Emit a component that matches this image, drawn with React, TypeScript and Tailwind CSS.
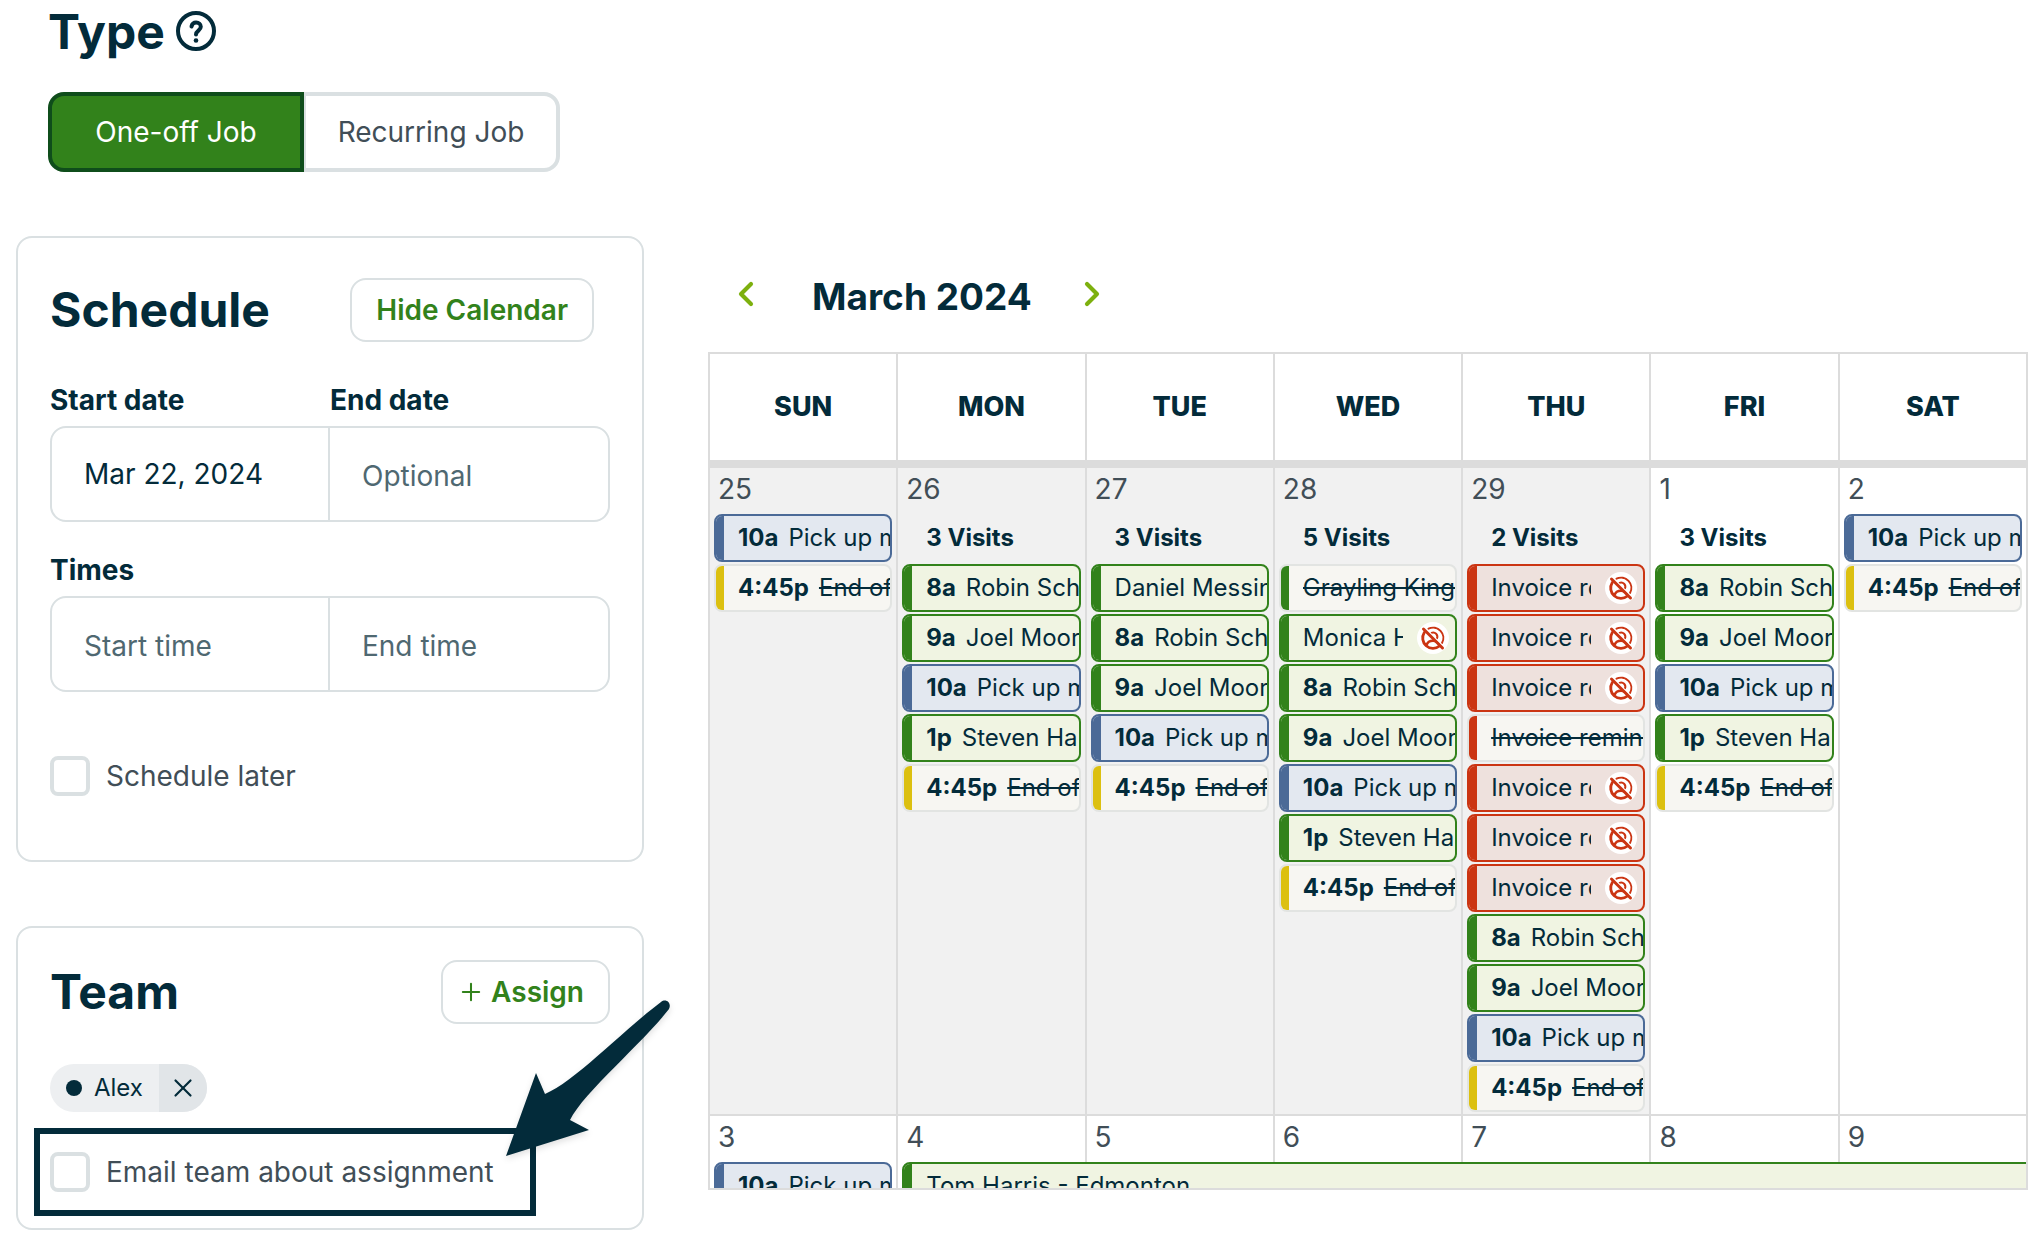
import { ChevronLeft, ChevronRight, Plus, X } from 'lucide-react';
import React, { useState } from 'react';
import { clsx } from 'clsx';

type Tone = 'blue' | 'green' | 'red' | 'yellow';

interface Visit {
  time?: string;
  title: string;
  tone: Tone;
  done?: boolean;
  unassigned?: boolean;
  spans?: boolean;
}

interface Day {
  date: number;
  outside?: boolean;
  visits?: number;
  items: Visit[];
}

const robin: Visit = { time: '8a', title: 'Robin Scho', tone: 'green' };
const joel: Visit = { time: '9a', title: 'Joel Moore', tone: 'green' };
const steven: Visit = { time: '1p', title: 'Steven Ha', tone: 'green' };
const pickUp: Visit = { time: '10a', title: 'Pick up mail', tone: 'blue' };
const endOfDay: Visit = { time: '4:45p', title: 'End of day', tone: 'yellow', done: true };
const invoice: Visit = { title: 'Invoice reminder', tone: 'red', unassigned: true };
const invoiceDone: Visit = { title: 'Invoice reminder', tone: 'red', done: true };

const weekdays = ['SUN', 'MON', 'TUE', 'WED', 'THU', 'FRI', 'SAT'];

const weeks: Day[][] = [
  [
    { date: 25, outside: true, items: [pickUp, endOfDay] },
    { date: 26, outside: true, visits: 3, items: [robin, joel, pickUp, steven, endOfDay] },
    {
      date: 27,
      outside: true,
      visits: 3,
      items: [{ title: 'Daniel Messina', tone: 'green' }, robin, joel, pickUp, endOfDay],
    },
    {
      date: 28,
      outside: true,
      visits: 5,
      items: [
        { title: 'Grayling King', tone: 'green', done: true },
        { title: 'Monica Hall', tone: 'green', unassigned: true },
        robin,
        joel,
        pickUp,
        steven,
        endOfDay,
      ],
    },
    {
      date: 29,
      outside: true,
      visits: 2,
      items: [
        invoice,
        invoice,
        invoice,
        invoiceDone,
        invoice,
        invoice,
        invoice,
        robin,
        joel,
        pickUp,
        endOfDay,
      ],
    },
    { date: 1, visits: 3, items: [robin, joel, pickUp, steven, endOfDay] },
    { date: 2, items: [pickUp, endOfDay] },
  ],
  [
    { date: 3, items: [pickUp] },
    { date: 4, items: [{ title: 'Tom Harris - Edmonton', tone: 'green', spans: true }] },
    { date: 5, items: [] },
    { date: 6, items: [] },
    { date: 7, items: [] },
    { date: 8, items: [] },
    { date: 9, items: [] },
  ],
];

const activeTone: Record<Tone, string> = {
  blue: 'border-[#4b6a97] bg-[#e3e8f0]',
  green: 'border-[#32821b] bg-[#f0f4e2]',
  red: 'border-[#cb3513] bg-[#eee1dd]',
  yellow: 'border-[#dcc010] bg-[#faf6dc]',
};

const barTone: Record<Tone, string> = {
  blue: 'bg-[#4b6a97]',
  green: 'bg-[#32821b]',
  red: 'bg-[#cb3513]',
  yellow: 'bg-[#dcc010]',
};

function HelpIcon() {
  return (
    <svg width="42" height="42" viewBox="0 0 42 42" fill="none" stroke="currentColor" aria-hidden="true">
      <circle cx="21" cy="21" r="18" strokeWidth="4" />
      <path
        d="M16.500 16.500c.6-2.600 2.200-4 4.600-4 2.700 0 4.700 1.700 4.700 4.300 0 3.700-4.800 3.900-4.800 7.700"
        strokeWidth="4"
        strokeLinecap="round"
      />
      <circle cx="21" cy="30.500" r="2.300" fill="currentColor" stroke="none" />
    </svg>
  );
}

function UnassignedIcon() {
  return (
    <span className="mr-1.5 flex size-8 shrink-0 items-center justify-center rounded-full bg-white text-[#cb3513]">
      <svg width="26" height="26" viewBox="0 0 26 26" fill="none" stroke="currentColor" aria-hidden="true">
        <path d="M8.500 3.700A10.300 10.300 0 0 1 22 18" strokeWidth="2" strokeLinecap="round" />
        <path d="M4.300 7.500A10.300 10.300 0 0 0 19.500 21" strokeWidth="2.800" strokeLinecap="round" />
        <path d="M11.500 7.800a4.200 4.200 0 0 1 5.500 5.500" strokeWidth="2" strokeLinecap="round" />
        <path d="M6.500 20c1-3 3.500-4.300 6.500-4.300s5 1.300 6.500 4.300" strokeWidth="2.500" />
        <path d="M5.500 3.500l18 18" stroke="white" strokeWidth="1.500" />
        <path d="M3.500 4l19 19" strokeWidth="3" strokeLinecap="round" />
      </svg>
    </span>
  );
}

function Arrow() {
  return (
    <svg
      className="pointer-events-none absolute -top-34 left-116 drop-shadow-md"
      width="168"
      height="162"
      viewBox="0 0 168 162"
      aria-hidden="true"
    >
      <path
        d="M2 158L32 75L41 96C70 84 115 36 157 4C162 0 168 5 165 11C138 46 80 94 66 122L85 132Z"
        fill="#032b3a"
      />
    </svg>
  );
}

function VisitItem({ visit }: { visit: Visit }) {
  const { time, title, tone, done, unassigned, spans } = visit;

  return (
    <div
      className={clsx(
        'flex h-12 items-center overflow-hidden rounded-lg border-2 text-2xl whitespace-nowrap',
        done ? 'border-[#e2e4e2] bg-[#f7f6f2]' : activeTone[tone],
        spans && 'relative z-10 w-[640%]',
      )}
    >
      <span className={clsx('w-2 shrink-0 self-stretch', barTone[tone])} />
      <span className="ml-3.5 min-w-0 flex-1 overflow-hidden">
        {time && <b className="mr-2.5 font-bold">{time}</b>}
        <span className={clsx(done && 'line-through')}>{title}</span>
      </span>
      {unassigned && (
        <span className="pl-3.5">
          <UnassignedIcon />
        </span>
      )}
    </div>
  );
}

function Checkbox({ label }: { label: string }) {
  return (
    <label className="flex items-center gap-4 text-[28px] leading-10 text-[#414e57]">
      <input
        type="checkbox"
        className="size-10 shrink-0 appearance-none rounded-lg border-4 border-[#dae0e2] bg-white checked:bg-[#32821b]"
      />
      {label}
    </label>
  );
}

const fieldClass =
  'h-23 w-1/2 min-w-0 bg-transparent px-8 text-[28px] outline-none placeholder:text-[#4f6871] placeholder-shown:pt-1';

function TypePicker() {
  const [type, setType] = useState('One-off Job');

  return (
    <div className="mt-9 flex h-20 w-fit">
      {['One-off Job', 'Recurring Job'].map((option) => (
        <button
          key={option}
          onClick={() => setType(option)}
          className={clsx(
            'w-64 border-4 text-[28px] first:rounded-l-2xl last:rounded-r-2xl',
            option === type
              ? 'border-[#0f4d1b] bg-[#32821b] text-white'
              : 'border-[#dae0e2] bg-white text-[#414e57] first:border-r-0 last:border-l-2',
          )}
        >
          {option}
        </button>
      ))}
    </div>
  );
}

function ScheduleCard() {
  return (
    <section className="rounded-2xl border-2 border-[#dae0e2] px-8 pt-10 pb-16">
      <div className="flex items-center justify-between pr-4">
        <h2 className="text-5xl leading-16 font-bold">Schedule</h2>
        <button className="h-16 rounded-2xl border-2 border-[#dae0e2] px-6 text-[28px] font-semibold text-[#32821b]">
          Hide Calendar
        </button>
      </div>

      <div className="mt-9.5 flex text-[28px] leading-10 font-bold">
        <label htmlFor="start-date" className="w-1/2">Start date</label>
        <label htmlFor="end-date" className="w-1/2">End date</label>
      </div>
      <div className="mt-1.5 flex divide-x-2 divide-[#dae0e2] rounded-2xl border-2 border-[#dae0e2]">
        <input id="start-date" className={fieldClass} defaultValue="Mar 22, 2024" />
        <input id="end-date" className={fieldClass} placeholder="Optional" />
      </div>

      <div className="mt-7 text-[28px] leading-10 font-bold">Times</div>
      <div className="mt-1.5 flex divide-x-2 divide-[#dae0e2] rounded-2xl border-2 border-[#dae0e2]">
        <input aria-label="Start time" className={fieldClass} placeholder="Start time" />
        <input aria-label="End time" className={fieldClass} placeholder="End time" />
      </div>

      <div className="mt-16">
        <Checkbox label="Schedule later" />
      </div>
    </section>
  );
}

function TeamCard() {
  return (
    <section className="mt-16 rounded-2xl border-2 border-[#dae0e2] px-8 pt-8 pb-3">
      <div className="flex items-center justify-between">
        <h2 className="text-5xl leading-16 font-bold">Team</h2>
        <button className="flex h-16 items-center gap-1.5 rounded-2xl border-2 border-[#dae0e2] pr-6 pl-3.5 text-[28px] font-semibold text-[#32821b]">
          <Plus size={28} strokeWidth={1.75} />
          Assign
        </button>
      </div>

      <div className="mt-10 flex h-12 w-fit overflow-hidden rounded-full bg-[#edeff1] text-2xl">
        <span className="flex items-center gap-3 px-4">
          <span className="size-4 rounded-full bg-[#032b3a]" />
          Alex
        </span>
        <button aria-label="Remove Alex" className="flex w-12 items-center justify-center bg-[#e1e5e8]">
          <X size={30} strokeWidth={1.75} />
        </button>
      </div>

      <div className="relative mt-4 -ml-4 w-fit border-6 border-[#032b3a] py-4.5 pr-9 pl-2.5">
        <Checkbox label="Email team about assignment" />
        <Arrow />
      </div>
    </section>
  );
}

function Calendar() {
  return (
    <section className="min-w-0 flex-1">
      <div className="mt-8 flex h-14 items-center gap-10 px-4.5">
        <button aria-label="Previous month" className="mr-1.5 pb-1 text-[#7db00e]">
          <ChevronLeft size={40} strokeWidth={2.5} />
        </button>
        <h2 className="text-[37px] leading-none font-bold">March 2024</h2>
        <button aria-label="Next month" className="pb-1 text-[#7db00e]">
          <ChevronRight size={40} strokeWidth={2.5} />
        </button>
      </div>

      <div className="mt-7 h-[838px] overflow-hidden border-y-2 border-r-2 border-[#dcdcdc]">
        <table className="w-full table-fixed border-separate border-spacing-0">
          <thead>
            <tr>
              {weekdays.map((day) => (
                <th
                  key={day}
                  className="h-[114px] border-b-8 border-l-2 border-[#dcdcdc] p-0 text-[27px] font-extrabold"
                >
                  {day}
                </th>
              ))}
            </tr>
          </thead>
          <tbody>
            {weeks.map((week, index) => (
              <tr key={index}>
                {week.map((day) => (
                  <td
                    key={day.date}
                    className={clsx(
                      'border-b-2 border-l-2 border-[#dcdcdc] p-0 px-1 pb-0.5 align-top',
                      day.outside && 'bg-[#f1f1f1]',
                    )}
                  >
                    <div className="mb-0.5 h-11 px-1 text-[28px] leading-10.5 text-[#414e57]">{day.date}</div>
                    {day.visits && (
                      <div className="mb-0.5 h-12 pl-6 text-2xl leading-12 font-bold">{day.visits} Visits</div>
                    )}
                    <div className="flex flex-col gap-0.5">
                      {day.items.map((visit, i) => (
                        <VisitItem key={i} visit={visit} />
                      ))}
                    </div>
                  </td>
                ))}
              </tr>
            ))}
          </tbody>
        </table>
      </div>
    </section>
  );
}

export default function App() {
  return (
    <main className="bg-white font-[Inter,sans-serif] text-[#032b3a]">
      <header className="px-12">
        <h1 className="flex h-14 items-end gap-2.5 text-5xl leading-none font-bold">
          Type
          <button aria-label="About job types" className="pb-1">
            <HelpIcon />
          </button>
        </h1>
        <TypePicker />
      </header>

      <div className="mt-16 flex items-start gap-16 pr-2 pb-2 pl-4">
        <div className="w-[628px] shrink-0">
          <ScheduleCard />
          <TeamCard />
        </div>
        <Calendar />
      </div>
    </main>
  );
}
